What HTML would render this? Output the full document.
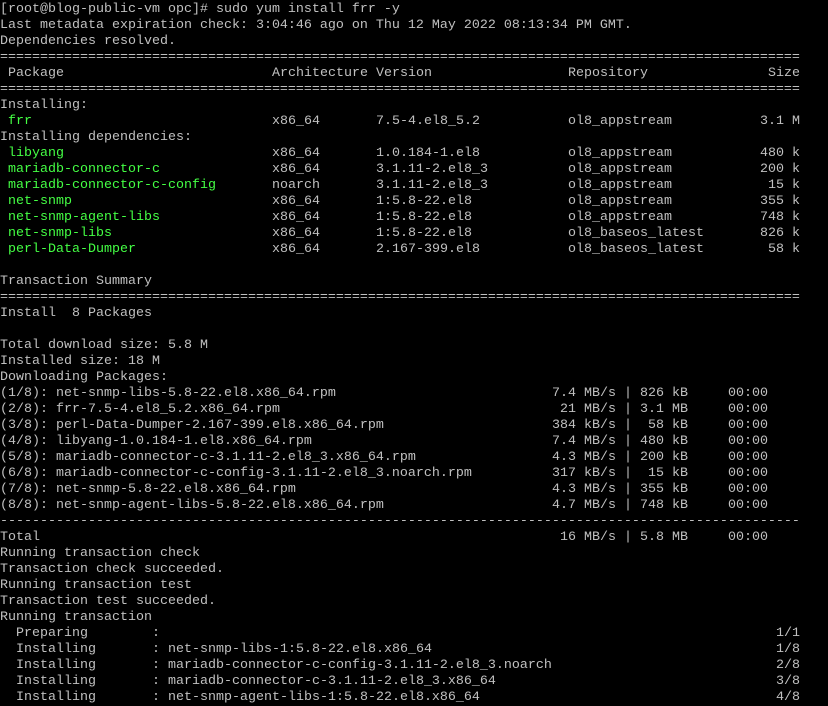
<!DOCTYPE html>
<html><head><meta charset="utf-8"><style>
html,body{margin:0;padding:0;background:#000;}
body{width:828px;height:706px;overflow:hidden;font-family:"Liberation Mono","DejaVu Sans Mono",monospace;font-size:13.33px;color:#c0c0c0;padding-top:2px;box-sizing:border-box;}
.r{position:relative;height:16px;line-height:16px;white-space:pre;}
.r span{position:absolute;top:0;white-space:pre;}
.g{color:#44ff44;}
</style></head><body>
<div class="r">[root@blog-public-vm opc]# sudo yum install frr -y</div>
<div class="r">Last metadata expiration check: 3:04:46 ago on Thu 12 May 2022 08:13:34 PM GMT.</div>
<div class="r">Dependencies resolved.</div>
<div class="r">====================================================================================================</div>
<div class="r"><span style="left:0"> Package</span><span style="left:272px">Architecture</span><span style="left:376px">Version</span><span style="left:568px">Repository</span><span style="right:28px">Size</span></div>
<div class="r">====================================================================================================</div>
<div class="r">Installing:</div>
<div class="r"><span style="left:0" class="g"> frr</span><span style="left:272px">x86_64</span><span style="left:376px">7.5-4.el8_5.2</span><span style="left:568px">ol8_appstream</span><span style="right:28px">3.1 M</span></div>
<div class="r">Installing dependencies:</div>
<div class="r"><span style="left:0" class="g"> libyang</span><span style="left:272px">x86_64</span><span style="left:376px">1.0.184-1.el8</span><span style="left:568px">ol8_appstream</span><span style="right:28px">480 k</span></div>
<div class="r"><span style="left:0" class="g"> mariadb-connector-c</span><span style="left:272px">x86_64</span><span style="left:376px">3.1.11-2.el8_3</span><span style="left:568px">ol8_appstream</span><span style="right:28px">200 k</span></div>
<div class="r"><span style="left:0" class="g"> mariadb-connector-c-config</span><span style="left:272px">noarch</span><span style="left:376px">3.1.11-2.el8_3</span><span style="left:568px">ol8_appstream</span><span style="right:28px">15 k</span></div>
<div class="r"><span style="left:0" class="g"> net-snmp</span><span style="left:272px">x86_64</span><span style="left:376px">1:5.8-22.el8</span><span style="left:568px">ol8_appstream</span><span style="right:28px">355 k</span></div>
<div class="r"><span style="left:0" class="g"> net-snmp-agent-libs</span><span style="left:272px">x86_64</span><span style="left:376px">1:5.8-22.el8</span><span style="left:568px">ol8_appstream</span><span style="right:28px">748 k</span></div>
<div class="r"><span style="left:0" class="g"> net-snmp-libs</span><span style="left:272px">x86_64</span><span style="left:376px">1:5.8-22.el8</span><span style="left:568px">ol8_baseos_latest</span><span style="right:28px">826 k</span></div>
<div class="r"><span style="left:0" class="g"> perl-Data-Dumper</span><span style="left:272px">x86_64</span><span style="left:376px">2.167-399.el8</span><span style="left:568px">ol8_baseos_latest</span><span style="right:28px">58 k</span></div>
<div class="r"> </div>
<div class="r">Transaction Summary</div>
<div class="r">====================================================================================================</div>
<div class="r">Install  8 Packages</div>
<div class="r"> </div>
<div class="r">Total download size: 5.8 M</div>
<div class="r">Installed size: 18 M</div>
<div class="r">Downloading Packages:</div>
<div class="r"><span style="left:0">(1/8): net-snmp-libs-5.8-22.el8.x86_64.rpm</span><span style="right:212px">7.4 MB/s</span><span style="left:624px">|</span><span style="right:140px">826 kB</span><span style="left:728px">00:00</span></div>
<div class="r"><span style="left:0">(2/8): frr-7.5-4.el8_5.2.x86_64.rpm</span><span style="right:212px">21 MB/s</span><span style="left:624px">|</span><span style="right:140px">3.1 MB</span><span style="left:728px">00:00</span></div>
<div class="r"><span style="left:0">(3/8): perl-Data-Dumper-2.167-399.el8.x86_64.rpm</span><span style="right:212px">384 kB/s</span><span style="left:624px">|</span><span style="right:140px">58 kB</span><span style="left:728px">00:00</span></div>
<div class="r"><span style="left:0">(4/8): libyang-1.0.184-1.el8.x86_64.rpm</span><span style="right:212px">7.4 MB/s</span><span style="left:624px">|</span><span style="right:140px">480 kB</span><span style="left:728px">00:00</span></div>
<div class="r"><span style="left:0">(5/8): mariadb-connector-c-3.1.11-2.el8_3.x86_64.rpm</span><span style="right:212px">4.3 MB/s</span><span style="left:624px">|</span><span style="right:140px">200 kB</span><span style="left:728px">00:00</span></div>
<div class="r"><span style="left:0">(6/8): mariadb-connector-c-config-3.1.11-2.el8_3.noarch.rpm</span><span style="right:212px">317 kB/s</span><span style="left:624px">|</span><span style="right:140px">15 kB</span><span style="left:728px">00:00</span></div>
<div class="r"><span style="left:0">(7/8): net-snmp-5.8-22.el8.x86_64.rpm</span><span style="right:212px">4.3 MB/s</span><span style="left:624px">|</span><span style="right:140px">355 kB</span><span style="left:728px">00:00</span></div>
<div class="r"><span style="left:0">(8/8): net-snmp-agent-libs-5.8-22.el8.x86_64.rpm</span><span style="right:212px">4.7 MB/s</span><span style="left:624px">|</span><span style="right:140px">748 kB</span><span style="left:728px">00:00</span></div>
<div class="r">----------------------------------------------------------------------------------------------------</div>
<div class="r"><span style="left:0">Total</span><span style="right:212px">16 MB/s</span><span style="left:624px">|</span><span style="right:140px">5.8 MB</span><span style="left:728px">00:00</span></div>
<div class="r">Running transaction check</div>
<div class="r">Transaction check succeeded.</div>
<div class="r">Running transaction test</div>
<div class="r">Transaction test succeeded.</div>
<div class="r">Running transaction</div>
<div class="r"><span style="left:0">  Preparing</span><span style="left:152px">:</span><span style="right:28px">1/1</span></div>
<div class="r"><span style="left:0">  Installing</span><span style="left:152px">: net-snmp-libs-1:5.8-22.el8.x86_64</span><span style="right:28px">1/8</span></div>
<div class="r"><span style="left:0">  Installing</span><span style="left:152px">: mariadb-connector-c-config-3.1.11-2.el8_3.noarch</span><span style="right:28px">2/8</span></div>
<div class="r"><span style="left:0">  Installing</span><span style="left:152px">: mariadb-connector-c-3.1.11-2.el8_3.x86_64</span><span style="right:28px">3/8</span></div>
<div class="r"><span style="left:0">  Installing</span><span style="left:152px">: net-snmp-agent-libs-1:5.8-22.el8.x86_64</span><span style="right:28px">4/8</span></div>
</body></html>
